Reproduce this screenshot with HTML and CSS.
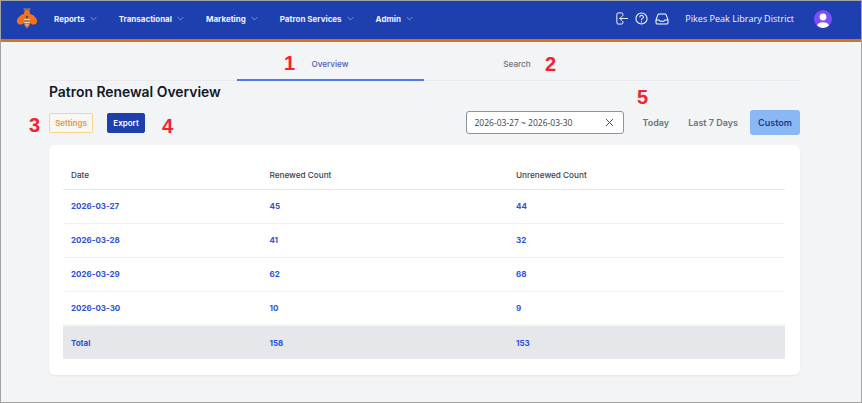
FILE: index.html
```html
<!DOCTYPE html>
<html lang="en">
<head>
<meta charset="utf-8">
<title>Patron Renewal Overview</title>
<link rel="stylesheet" href="styles.css">
</head>
<body>
<div class="frame">
  <header class="nav">
    <svg class="logo" width="22" height="21" viewBox="0 0 22 21">
      <path d="M7.500 1h7M9 1l1 3.500M13 1l-1 3.500" stroke="#b08a70" stroke-width="1" fill="none"/>
      <circle cx="11" cy="5" r="3" fill="#f97316"/>
      <path d="M9.500 6C7 5.500 3 7.500 1.200 11.500c-1 2.500 .5 5 3 5 3 0 5.800-2.500 6.300-6z" fill="#f97316"/>
      <path d="M12.500 6C15 5.500 19 7.500 20.800 11.500c1 2.500-.5 5-3 5-3 0-5.800-2.500-6.300-6z" fill="#f97316"/>
      <path d="M8 10h6v4.500c0 2.500-1.500 4.500-3 6-1.500-1.500-3-3.500-3-6z" fill="#b97a4c"/>
      <path d="M8 11.500h6M8.300 14.500h5.400M9.300 17h3.400" stroke="#f0dcc6" stroke-width=".9"/>
    </svg>
    <nav class="menu">
      <a class="menu-item">Reports <svg class="chev" viewBox="0 0 10 6"><path d="M1 1l4 4 4-4"/></svg></a>
      <a class="menu-item">Transactional <svg class="chev" viewBox="0 0 10 6"><path d="M1 1l4 4 4-4"/></svg></a>
      <a class="menu-item">Marketing <svg class="chev" viewBox="0 0 10 6"><path d="M1 1l4 4 4-4"/></svg></a>
      <a class="menu-item">Patron Services <svg class="chev" viewBox="0 0 10 6"><path d="M1 1l4 4 4-4"/></svg></a>
      <a class="menu-item">Admin <svg class="chev" viewBox="0 0 10 6"><path d="M1 1l4 4 4-4"/></svg></a>
    </nav>
    <div class="nav-right">
      <div class="nav-icons">
        <svg width="12" height="13" viewBox="0 0 14 15" class="icon"><path d="M8 4V2.500A1.500 1.500 0 0 0 6.500 1h-4A1.500 1.500 0 0 0 1 2.500v10A1.500 1.500 0 0 0 2.500 14h4A1.500 1.500 0 0 0 8 12.500V11M4.500 7.500h9M7 5l-2.500 2.500L7 10"/></svg>
        <svg width="13" height="13" viewBox="0 0 14 14" class="icon"><circle cx="7" cy="7" r="6"/><path d="M5.200 5.400a1.900 1.900 0 1 1 2.700 1.700c-.6.300-.9.700-.9 1.300M7 10.300v.4"/></svg>
        <svg width="14" height="12" viewBox="0 0 15 13" class="icon"><path d="M1 7.500V10.500A1.500 1.500 0 0 0 2.500 12h10a1.500 1.500 0 0 0 1.500-1.500V7.500l-2-5.500A1.500 1.500 0 0 0 10.600 1H4.400A1.500 1.500 0 0 0 3 2zM1 7.500h3.500l1 1.500h4l1-1.500H14"/></svg>
      </div>
      <span class="org">Pikes Peak Library District</span>
      <svg class="avatar" width="18" height="18" viewBox="0 0 18 18">
        <defs><clipPath id="c"><circle cx="9" cy="9" r="9"/></clipPath></defs>
        <circle cx="9" cy="9" r="9" fill="#7c4dff"/>
        <g clip-path="url(#c)" fill="#fff"><circle cx="9" cy="7" r="3.400"/><ellipse cx="9" cy="16" rx="6" ry="3.800"/></g>
      </svg>
    </div>
  </header>

  <main class="content">
    <div class="tabs">
      <a class="tab active">Overview</a>
      <a class="tab">Search</a>
    </div>
    <h1 class="title">Patron Renewal Overview</h1>
    <div class="toolbar">
      <div class="actions">
        <button class="btn btn-outline">Settings</button>
        <button class="btn btn-solid">Export</button>
      </div>
      <div class="filters">
        <div class="date-input"><span>2026-03-27 ~ 2026-03-30</span>
          <svg width="9" height="9" viewBox="0 0 9 9" class="clear"><path d="M1 1l7 7M8 1L1 8"/></svg>
        </div>
        <button class="range">Today</button>
        <button class="range">Last 7 Days</button>
        <button class="range selected">Custom</button>
      </div>
    </div>
    <section class="card">
      <table class="data">
        <thead><tr><th class="c1">Date</th><th class="c2">Renewed Count</th><th>Unrenewed Count</th></tr></thead>
        <tbody>
          <tr><td>2026-03-27</td><td>45</td><td>44</td></tr>
          <tr><td>2026-03-28</td><td>41</td><td>32</td></tr>
          <tr><td>2026-03-29</td><td>62</td><td>68</td></tr>
          <tr><td>2026-03-30</td><td>10</td><td>9</td></tr>
        </tbody>
        <tfoot><tr><td>Total</td><td>158</td><td>153</td></tr></tfoot>
      </table>
    </section>
  </main>

  <span class="mark m1">1</span>
  <span class="mark m2">2</span>
  <span class="mark m3">3</span>
  <span class="mark m4">4</span>
  <span class="mark m5">5</span>
</div>
</body>
</html>
```

FILE: styles.css
```css
* { box-sizing: border-box; }
html, body { margin: 0; padding: 0; }
body { width: 862px; height: 403px; overflow: hidden; font-family: Inter, "Liberation Sans", sans-serif; }

.frame {
  position: relative;
  width: 862px;
  height: 403px;
  border: 1px solid #a3a3a3;
  background: #f3f4f6;
}

.nav {
  display: flex;
  align-items: center;
  height: 41px;
  padding: 0 29px 3px 15px;
  background: #1e40af;
  border-bottom: 3px solid #d97706;
  color: #fff;
}
.logo { flex: none; }
.menu { display: flex; gap: 22px; margin-left: 16px; }
.menu-item { display: flex; align-items: center; gap: 5px; font-size: 8px; font-weight: 700; color: #eef2ff; white-space: nowrap; }
.chev { width: 7px; height: 5px; fill: none; stroke: #a5b4e8; stroke-width: 1; }
.nav-right { display: flex; align-items: center; margin-left: auto; }
.nav-icons { display: flex; align-items: center; gap: 7px; }
.icon { fill: none; stroke: #fff; stroke-width: 1.100; stroke-linecap: round; stroke-linejoin: round; }
.org { margin-left: 16px; font-family: "Open Sans", sans-serif; font-size: 9.050px; color: #f1f5ff; white-space: nowrap; }
.avatar { margin-left: 20px; }

.content { padding: 0 61px 0 48px; }

.tabs { display: flex; justify-content: center; height: 39px; padding-right: 2px; border-bottom: 1px solid #e8eaee; }
.tab {
  width: 187px;
  height: 39px;
  display: flex;
  align-items: center;
  justify-content: center;
  padding-top: 5px;
  font-size: 8.200px;
  font-weight: 500;
  color: #6b7280;
}
.tab.active { color: #4f62b8; border-bottom: 2px solid #4f78e8; padding-top: 7px; }

.title { margin: 1px 0 0; font-size: 13.900px; line-height: 20px; font-weight: 600; color: #111827; }

.toolbar { display: flex; justify-content: space-between; align-items: center; margin-top: 8px; height: 25px; }
.actions { display: flex; gap: 14px; align-items: center; }
.btn { height: 20px; padding: 0 2px; border-radius: 2px; font: 600 8px Inter, "Liberation Sans", sans-serif; }
.btn-outline { width: 44px; color: #e09a4a; background: #f8f7f2; border: 1px solid #f9d58c; }
.btn-solid { width: 38px; color: #fff; background: #1e40af; border: 1px solid #1e40af; }

.filters { display: flex; align-items: center; }
.date-input {
  display: flex;
  align-items: center;
  justify-content: space-between;
  width: 158px;
  height: 23px;
  padding: 0 9px 0 7px;
  background: #fff;
  border: 1px solid #8f949c;
  border-radius: 3px;
  font-family: "Open Sans", sans-serif;
  font-size: 8.500px;
  color: #374151;
}
.clear { fill: none; stroke: #4b5563; stroke-width: 1; }
.range {
  height: 25px;
  padding: 0 8px;
  margin-left: 10px;
  background: none;
  border: 0;
  border-radius: 3px;
  font: 600 9px Inter, "Liberation Sans", sans-serif;
  color: #6b7280;
}
.range + .range { margin-left: 3px; }
.range.selected { width: 50px; padding: 0; margin-left: 4px; background: #8ab8f5; color: #1e3a8a; font-weight: 600; }

.card {
  margin-top: 10px;
  height: 230px;
  padding: 16px 15px 0 14px;
  background: #fff;
  border-radius: 6px;
  box-shadow: 0 1px 2px rgba(0,0,0,.07);
}
.data { width: 100%; border-collapse: collapse; table-layout: fixed; font-size: 8.200px; }
.data th { height: 28px; padding: 0 8px; text-align: left; font-weight: 500; color: #374151; border-bottom: 1px solid #e5e7eb; }
.data .c1 { width: 198.500px; }
.data .c2 { width: 246.500px; }
.data td { height: 34px; padding: 0 8px; font-size: 8px; font-weight: 700; color: #2952d9; border-bottom: 1px solid #eef0f3; }
.data tfoot td { height: 34px; background: #e5e7eb; border-top: 2px solid #f3f4f6; border-bottom: 0; }

.mark { position: absolute; font: 700 20px "Liberation Sans", sans-serif; line-height: 20px; color: #f6212d; }
.m1 { left: 283px; top: 52px; }
.m2 { left: 544px; top: 53px; }
.m3 { left: 28px; top: 114px; }
.m4 { left: 161px; top: 115px; }
.m5 { left: 636px; top: 86px; }
```
